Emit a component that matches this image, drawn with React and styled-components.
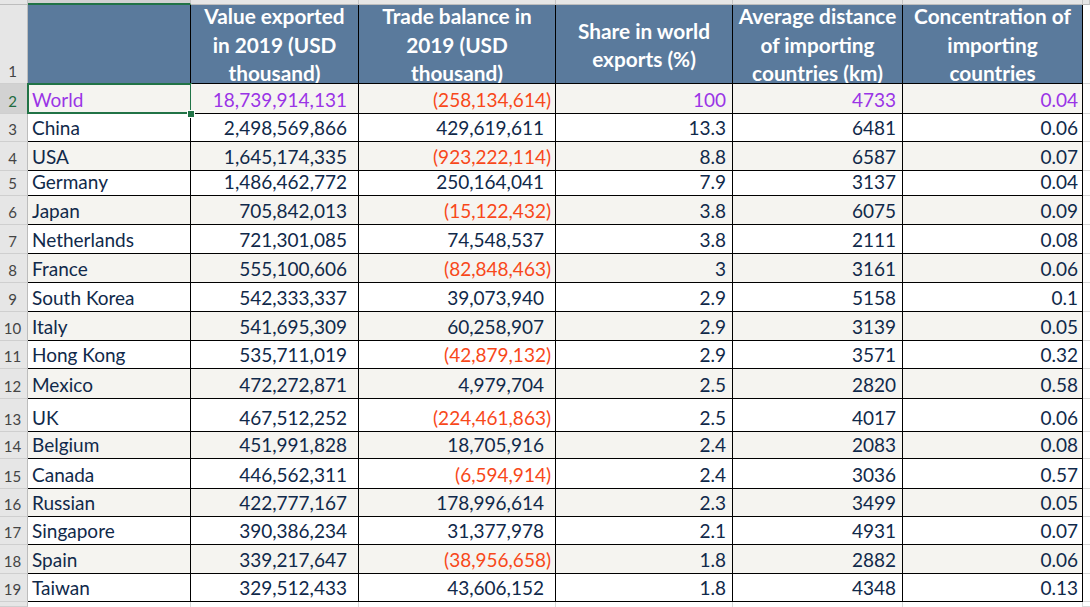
import React from "react";
import styled, { createGlobalStyle, css } from "styled-components";

const GlobalStyle = createGlobalStyle`
  html, body {
    margin: 0;
    padding: 0;
    background: #ffffff;
  }
  body {
    font-family: Lato, "Open Sans", sans-serif;
    overflow: hidden;
  }
`;

const COLS = "28px 163px 168px 197px 177px 170px 180px 1fr";

const Sheet = styled.div`
  display: flex;
  flex-direction: column;
  width: 1090px;
  height: 607px;
  overflow: hidden;
`;

const Row = styled.div`
  display: grid;
  grid-template-columns: ${COLS};
  height: ${({ $h }) => $h}px;
  flex-shrink: 0;
`;

const ColHead = styled.div`
  box-sizing: border-box;
  background: ${({ $active }) => ($active ? "#d2d2d2" : "#e6e6e6")};
  border-right: 1px solid #c4c4c4;
  border-bottom: ${({ $active }) =>
    $active ? "2px solid #217346" : "1px solid #bdbdbd"};
`;

const RowHead = styled.div`
  box-sizing: border-box;
  display: flex;
  align-items: flex-end;
  justify-content: center;
  padding-bottom: 3px;
  padding-right: 2px;
  background: ${({ $active }) => ($active ? "#d2d2d2" : "#e6e6e6")};
  color: ${({ $active }) => ($active ? "#1e6b40" : "#444444")};
  border-right: 1px solid #bdbdbd;
  border-bottom: 1px solid #cfcfcf;
  font-size: 15px;
  line-height: 17px;
`;

const HeadCell = styled.div`
  box-sizing: border-box;
  display: flex;
  flex-direction: column;
  align-items: center;
  justify-content: center;
  overflow: hidden;
  background: #5a7a9c;
  color: #ffffff;
  font-weight: 700;
  font-size: 20.8px;
  line-height: 28.5px;
  border-right: 1px solid #000000;
  border-bottom: 1px solid #000000;
  white-space: nowrap;
  padding-top: 2px;
`;

const toneColor = {
  base: "#10294a",
  world: "#9a34e6",
  neg: "#f8481a",
};

const Cell = styled.div`
  box-sizing: border-box;
  position: relative;
  display: flex;
  align-items: flex-end;
  justify-content: ${({ $align }) => ($align === "left" ? "flex-start" : "flex-end")};
  padding: 0 ${({ $pr }) => $pr || 4}px 2px 4px;
  background: ${({ $alt }) => ($alt ? "#f5f4f0" : "#ffffff")};
  color: ${({ $tone }) => toneColor[$tone] || toneColor.base};
  border-right: 1px solid #000000;
  border-bottom: 1px solid #000000;
  font-size: 19px;
  line-height: 22px;
  white-space: nowrap;

  ${({ $selected }) =>
    $selected &&
    css`
      &::after {
        content: "";
        position: absolute;
        top: -1px;
        left: -1px;
        right: -2px;
        bottom: -1px;
        border: 2px solid #217346;
        pointer-events: none;
      }
    `}
`;

const Handle = styled.span`
  position: absolute;
  right: -5px;
  bottom: -5px;
  width: 6px;
  height: 6px;
  background: #217346;
  border: 1px solid #ffffff;
  z-index: 2;
`;

const Filler = styled.div`
  box-sizing: border-box;
  background: #ffffff;
  border-bottom: 1px solid #d9d9d9;
`;

const BlankCell = styled.div`
  box-sizing: border-box;
  background: #ffffff;
  border-right: 1px solid #d9d9d9;
`;

const headers = [
  [],
  ["Value exported", "in 2019 (USD", "thousand)"],
  ["Trade balance in", "2019 (USD", "thousand)"],
  ["Share in world", "exports (%)"],
  ["Average distance", "of importing", "countries (km)"],
  ["Concentration of", "importing", "countries"],
];

const rows = [
  ["World", "18,739,914,131", "(258,134,614)", "100", "4733", "0.04", 30],
  ["China", "2,498,569,866", "429,619,611", "13.3", "6481", "0.06", 28],
  ["USA", "1,645,174,335", "(923,222,114)", "8.8", "6587", "0.07", 29],
  ["Germany", "1,486,462,772", "250,164,041", "7.9", "3137", "0.04", 25],
  ["Japan", "705,842,013", "(15,122,432)", "3.8", "6075", "0.09", 29],
  ["Netherlands", "721,301,085", "74,548,537", "3.8", "2111", "0.08", 29],
  ["France", "555,100,606", "(82,848,463)", "3", "3161", "0.06", 29],
  ["South Korea", "542,333,337", "39,073,940", "2.9", "5158", "0.1", 29],
  ["Italy", "541,695,309", "60,258,907", "2.9", "3139", "0.05", 29],
  ["Hong Kong", "535,711,019", "(42,879,132)", "2.9", "3571", "0.32", 28],
  ["Mexico", "472,272,871", "4,979,704", "2.5", "2820", "0.58", 30],
  ["UK", "467,512,252", "(224,461,863)", "2.5", "4017", "0.06", 33],
  ["Belgium", "451,991,828", "18,705,916", "2.4", "2083", "0.08", 27],
  ["Canada", "446,562,311", "(6,594,914)", "2.4", "3036", "0.57", 30],
  ["Russian", "422,777,167", "178,996,614", "2.3", "3499", "0.05", 28],
  ["Singapore", "390,386,234", "31,377,978", "2.1", "4931", "0.07", 28],
  ["Spain", "339,217,647", "(38,956,658)", "1.8", "2882", "0.06", 29],
  ["Taiwan", "329,512,433", "43,606,152", "1.8", "4348", "0.13", 28],
];

const isNeg = (v) => v.startsWith("(");

const App = () => {
  return (
    <>
      <GlobalStyle />
      <Sheet>
        <Row $h={5}>
          <ColHead />
          <ColHead $active />
          <ColHead />
          <ColHead />
          <ColHead />
          <ColHead />
          <ColHead />
          <ColHead />
        </Row>

        <Row $h={79}>
          <RowHead>1</RowHead>
          {headers.map((lines, i) => (
            <HeadCell key={i}>
              {lines.map((l) => (
                <span key={l}>{l}</span>
              ))}
            </HeadCell>
          ))}
          <Filler />
        </Row>

        {rows.map(([name, value, balance, share, dist, conc, h], i) => {
          const alt = i % 2 === 0;
          const world = i === 0;
          const tone = world ? "world" : "base";
          return (
            <Row key={name} $h={h}>
              <RowHead $active={world}>{i + 2}</RowHead>
              <Cell $align="left" $alt={alt} $tone={tone} $selected={world}>
                {name}
                {world && <Handle />}
              </Cell>
              <Cell $alt={alt} $tone={tone} $pr={11}>
                {value}
              </Cell>
              <Cell
                $alt={alt}
                $tone={isNeg(balance) ? "neg" : tone}
                $pr={isNeg(balance) ? 4 : 11}
              >
                {balance}
              </Cell>
              <Cell $alt={alt} $tone={tone} $pr={6}>
                {share}
              </Cell>
              <Cell $alt={alt} $tone={tone} $pr={6}>
                {dist}
              </Cell>
              <Cell $alt={alt} $tone={tone} $pr={4}>
                {conc}
              </Cell>
              <Filler />
            </Row>
          );
        })}

        <Row $h={5}>
          <RowHead />
          <BlankCell />
          <BlankCell />
          <BlankCell />
          <BlankCell />
          <BlankCell />
          <BlankCell />
          <Filler />
        </Row>
      </Sheet>
    </>
  );
};

export default App;
